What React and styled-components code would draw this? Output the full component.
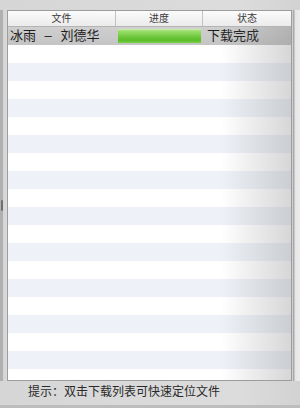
import React from 'react';
import styled, { createGlobalStyle } from 'styled-components';

const GlobalStyle = createGlobalStyle`
  html, body {
    margin: 0;
    padding: 0;
    background: #d9d9d9;
  }
  body {
    font-family: "Liberation Sans", "Noto Sans CJK SC", sans-serif;
  }
`;

const Window = styled.div`
  width: 300px;
  height: 408px;
  display: flex;
  flex-direction: column;
  background: linear-gradient(to right, #d6d6d6 0%, #dcdcdc 80%, #d2d2d2 100%);
  overflow: hidden;
`;

const TopBar = styled.div`
  height: 10px;
  flex-shrink: 0;
`;

const Middle = styled.div`
  flex: 1;
  display: flex;
  min-height: 0;
`;

const LeftEdge = styled.div`
  width: 7px;
  flex-shrink: 0;
  display: flex;
  align-items: center;
  background: linear-gradient(to right, #b0b0b0 0, #b0b0b0 3px, #d4d4d4 3px, #dadada 7px);
`;

const Handle = styled.div`
  width: 2px;
  height: 11px;
  margin-left: 1px;
  margin-top: 20px;
  background: #6f6f6f;
  border-radius: 1px;
`;

const RightEdge = styled.div`
  width: 8px;
  flex-shrink: 0;
  background: linear-gradient(to right, #cfcfcf 0, #cfcfcf 1px, #a9a9a9 1px, #a9a9a9 2px, #e6e6e6 3px, #ececec 8px);
`;

const Panel = styled.div`
  flex: 1;
  position: relative;
  display: flex;
  flex-direction: column;
  border: 1px solid #9c9c9c;
  background: #fff;
  overflow: hidden;
`;

const Columns = styled.div`
  display: grid;
  grid-template-columns: 108px 87px 1fr;
`;

const Header = styled(Columns)`
  height: 15px;
  flex-shrink: 0;
  background: linear-gradient(to bottom, #fbfbfb, #ebebeb);
  border-bottom: 1px solid #b4b4b4;
`;

const HeaderCell = styled.div`
  font-size: 10px;
  line-height: 15px;
  color: #3a3a3a;
  text-align: center;
  border-right: ${p => (p.$last ? 'none' : '1px solid #c2c2c2')};
`;

const List = styled.div`
  flex: 1;
  overflow: hidden;
`;

const Row = styled(Columns)`
  height: 18px;
  align-items: center;
  background: ${p =>
    p.$selected
      ? 'linear-gradient(to bottom, #cfcfcf, #c4c4c4)'
      : p.$odd
      ? '#eef2f8'
      : '#ffffff'};
`;

const Cell = styled.div`
  font-size: 13px;
  line-height: 18px;
  color: #1e1e1e;
  padding-left: ${p => p.$pad || 2}px;
  word-spacing: ${p => p.$spread || 0}px;
  white-space: nowrap;
`;

const Progress = styled.div`
  height: 13px;
  margin: 0 2px 0 2px;
  background: linear-gradient(
    to bottom,
    #a6e27c 0%,
    #8bd65a 25%,
    #6cc63a 55%,
    #5cbd2a 80%,
    #78cf48 100%
  );
  border-top: 1px solid #c5eca8;
`;

const Shade = styled.div`
  position: absolute;
  top: 16px;
  right: 0;
  bottom: 0;
  width: 70px;
  pointer-events: none;
  background: linear-gradient(to right, rgba(120, 120, 120, 0), rgba(120, 120, 120, 0.3));
`;

const Footer = styled.div`
  height: 27px;
  flex-shrink: 0;
  display: flex;
  align-items: flex-start;
  padding-left: 28px;
  font-size: 12px;
  line-height: 14px;
  color: #2a2a2a;
  border-bottom: 3px solid #bdbdbd;
  box-sizing: border-box;
  padding-top: 4px;
`;

const rows = Array.from({ length: 22 }, (_, i) => i);

export default function App() {
  return (
    <>
      <GlobalStyle />
      <Window>
        <TopBar />
        <Middle>
          <LeftEdge>
            <Handle />
          </LeftEdge>
          <Panel>
            <Header>
              <HeaderCell>文件</HeaderCell>
              <HeaderCell>进度</HeaderCell>
              <HeaderCell $last>状态</HeaderCell>
            </Header>
            <List>
              {rows.map(i =>
                i === 0 ? (
                  <Row key={i} $selected>
                    <Cell $spread={5}>冰雨 – 刘德华</Cell>
                    <Progress />
                    <Cell $pad={4}>下载完成</Cell>
                  </Row>
                ) : (
                  <Row key={i} $odd={i % 2 === 0} />
                )
              )}
            </List>
            <Shade />
          </Panel>
          <RightEdge />
        </Middle>
        <Footer>提示：双击下载列表可快速定位文件</Footer>
      </Window>
    </>
  );
}
